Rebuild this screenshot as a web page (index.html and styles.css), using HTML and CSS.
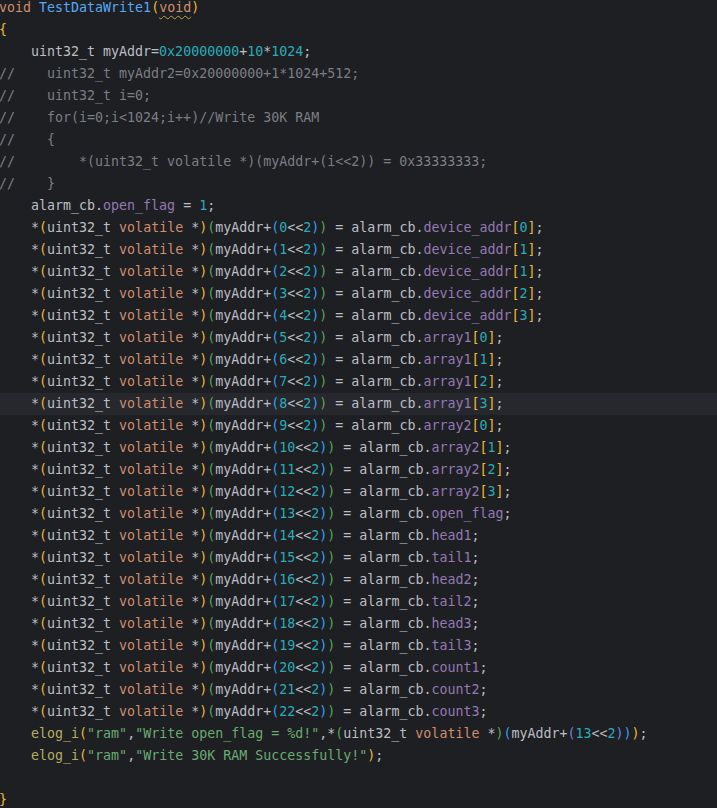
FILE: index.html
```html
<!DOCTYPE html>
<html lang="en">

<head>
    <meta charset="UTF-8">
    <meta name="viewport" content="width=device-width, initial-scale=1.0">
    <title>TestDataWrite1</title>

    <link rel="stylesheet" href="styles.css">

</head>

<body>
    <main class="editor">
<div class="line"><span class="kw">void</span> <span class="fn">TestDataWrite1</span><span class="p1">(</span><span class="kw warn">void</span><span class="p1">)</span></div>
<div class="line"><span class="p1">{</span></div>
<div class="line">    uint32_t myAddr=<span class="num">0x20000000</span>+<span class="num">10</span>*<span class="num">1024</span>;</div>
<div class="line cm">//    uint32_t myAddr2=0x20000000+1*1024+512;</div>
<div class="line cm">//    uint32_t i=0;</div>
<div class="line cm">//    for(i=0;i&lt;1024;i++)//Write 30K RAM</div>
<div class="line cm">//    {</div>
<div class="line cm">//        *(uint32_t volatile *)(myAddr+(i&lt;&lt;2)) = 0x33333333;</div>
<div class="line cm">//    }</div>
<div class="line">    alarm_cb.<span class="fld">open_flag</span> = <span class="num">1</span>;</div>
<div class="line">    *<span class="p1">(</span>uint32_t <span class="kw">volatile</span> *<span class="p1">)</span><span class="p2">(</span>myAddr+<span class="p3">(</span><span class="num">0</span>&lt;&lt;<span class="num">2</span><span class="p3">)</span><span class="p2">)</span> = alarm_cb.<span class="fld">device_addr</span><span class="p1">[</span><span class="num">0</span><span class="p1">]</span>;</div>
<div class="line">    *<span class="p1">(</span>uint32_t <span class="kw">volatile</span> *<span class="p1">)</span><span class="p2">(</span>myAddr+<span class="p3">(</span><span class="num">1</span>&lt;&lt;<span class="num">2</span><span class="p3">)</span><span class="p2">)</span> = alarm_cb.<span class="fld">device_addr</span><span class="p1">[</span><span class="num">1</span><span class="p1">]</span>;</div>
<div class="line">    *<span class="p1">(</span>uint32_t <span class="kw">volatile</span> *<span class="p1">)</span><span class="p2">(</span>myAddr+<span class="p3">(</span><span class="num">2</span>&lt;&lt;<span class="num">2</span><span class="p3">)</span><span class="p2">)</span> = alarm_cb.<span class="fld">device_addr</span><span class="p1">[</span><span class="num">1</span><span class="p1">]</span>;</div>
<div class="line">    *<span class="p1">(</span>uint32_t <span class="kw">volatile</span> *<span class="p1">)</span><span class="p2">(</span>myAddr+<span class="p3">(</span><span class="num">3</span>&lt;&lt;<span class="num">2</span><span class="p3">)</span><span class="p2">)</span> = alarm_cb.<span class="fld">device_addr</span><span class="p1">[</span><span class="num">2</span><span class="p1">]</span>;</div>
<div class="line">    *<span class="p1">(</span>uint32_t <span class="kw">volatile</span> *<span class="p1">)</span><span class="p2">(</span>myAddr+<span class="p3">(</span><span class="num">4</span>&lt;&lt;<span class="num">2</span><span class="p3">)</span><span class="p2">)</span> = alarm_cb.<span class="fld">device_addr</span><span class="p1">[</span><span class="num">3</span><span class="p1">]</span>;</div>
<div class="line">    *<span class="p1">(</span>uint32_t <span class="kw">volatile</span> *<span class="p1">)</span><span class="p2">(</span>myAddr+<span class="p3">(</span><span class="num">5</span>&lt;&lt;<span class="num">2</span><span class="p3">)</span><span class="p2">)</span> = alarm_cb.<span class="fld">array1</span><span class="p1">[</span><span class="num">0</span><span class="p1">]</span>;</div>
<div class="line">    *<span class="p1">(</span>uint32_t <span class="kw">volatile</span> *<span class="p1">)</span><span class="p2">(</span>myAddr+<span class="p3">(</span><span class="num">6</span>&lt;&lt;<span class="num">2</span><span class="p3">)</span><span class="p2">)</span> = alarm_cb.<span class="fld">array1</span><span class="p1">[</span><span class="num">1</span><span class="p1">]</span>;</div>
<div class="line">    *<span class="p1">(</span>uint32_t <span class="kw">volatile</span> *<span class="p1">)</span><span class="p2">(</span>myAddr+<span class="p3">(</span><span class="num">7</span>&lt;&lt;<span class="num">2</span><span class="p3">)</span><span class="p2">)</span> = alarm_cb.<span class="fld">array1</span><span class="p1">[</span><span class="num">2</span><span class="p1">]</span>;</div>
<div class="line current">    *<span class="p1">(</span>uint32_t <span class="kw">volatile</span> *<span class="p1">)</span><span class="p2">(</span>myAddr+<span class="p3">(</span><span class="num">8</span>&lt;&lt;<span class="num">2</span><span class="p3">)</span><span class="p2">)</span> = alarm_cb.<span class="fld">array1</span><span class="p1">[</span><span class="num">3</span><span class="p1">]</span>;</div>
<div class="line">    *<span class="p1">(</span>uint32_t <span class="kw">volatile</span> *<span class="p1">)</span><span class="p2">(</span>myAddr+<span class="p3">(</span><span class="num">9</span>&lt;&lt;<span class="num">2</span><span class="p3">)</span><span class="p2">)</span> = alarm_cb.<span class="fld">array2</span><span class="p1">[</span><span class="num">0</span><span class="p1">]</span>;</div>
<div class="line">    *<span class="p1">(</span>uint32_t <span class="kw">volatile</span> *<span class="p1">)</span><span class="p2">(</span>myAddr+<span class="p3">(</span><span class="num">10</span>&lt;&lt;<span class="num">2</span><span class="p3">)</span><span class="p2">)</span> = alarm_cb.<span class="fld">array2</span><span class="p1">[</span><span class="num">1</span><span class="p1">]</span>;</div>
<div class="line">    *<span class="p1">(</span>uint32_t <span class="kw">volatile</span> *<span class="p1">)</span><span class="p2">(</span>myAddr+<span class="p3">(</span><span class="num">11</span>&lt;&lt;<span class="num">2</span><span class="p3">)</span><span class="p2">)</span> = alarm_cb.<span class="fld">array2</span><span class="p1">[</span><span class="num">2</span><span class="p1">]</span>;</div>
<div class="line">    *<span class="p1">(</span>uint32_t <span class="kw">volatile</span> *<span class="p1">)</span><span class="p2">(</span>myAddr+<span class="p3">(</span><span class="num">12</span>&lt;&lt;<span class="num">2</span><span class="p3">)</span><span class="p2">)</span> = alarm_cb.<span class="fld">array2</span><span class="p1">[</span><span class="num">3</span><span class="p1">]</span>;</div>
<div class="line">    *<span class="p1">(</span>uint32_t <span class="kw">volatile</span> *<span class="p1">)</span><span class="p2">(</span>myAddr+<span class="p3">(</span><span class="num">13</span>&lt;&lt;<span class="num">2</span><span class="p3">)</span><span class="p2">)</span> = alarm_cb.<span class="fld">open_flag</span>;</div>
<div class="line">    *<span class="p1">(</span>uint32_t <span class="kw">volatile</span> *<span class="p1">)</span><span class="p2">(</span>myAddr+<span class="p3">(</span><span class="num">14</span>&lt;&lt;<span class="num">2</span><span class="p3">)</span><span class="p2">)</span> = alarm_cb.<span class="fld">head1</span>;</div>
<div class="line">    *<span class="p1">(</span>uint32_t <span class="kw">volatile</span> *<span class="p1">)</span><span class="p2">(</span>myAddr+<span class="p3">(</span><span class="num">15</span>&lt;&lt;<span class="num">2</span><span class="p3">)</span><span class="p2">)</span> = alarm_cb.<span class="fld">tail1</span>;</div>
<div class="line">    *<span class="p1">(</span>uint32_t <span class="kw">volatile</span> *<span class="p1">)</span><span class="p2">(</span>myAddr+<span class="p3">(</span><span class="num">16</span>&lt;&lt;<span class="num">2</span><span class="p3">)</span><span class="p2">)</span> = alarm_cb.<span class="fld">head2</span>;</div>
<div class="line">    *<span class="p1">(</span>uint32_t <span class="kw">volatile</span> *<span class="p1">)</span><span class="p2">(</span>myAddr+<span class="p3">(</span><span class="num">17</span>&lt;&lt;<span class="num">2</span><span class="p3">)</span><span class="p2">)</span> = alarm_cb.<span class="fld">tail2</span>;</div>
<div class="line">    *<span class="p1">(</span>uint32_t <span class="kw">volatile</span> *<span class="p1">)</span><span class="p2">(</span>myAddr+<span class="p3">(</span><span class="num">18</span>&lt;&lt;<span class="num">2</span><span class="p3">)</span><span class="p2">)</span> = alarm_cb.<span class="fld">head3</span>;</div>
<div class="line">    *<span class="p1">(</span>uint32_t <span class="kw">volatile</span> *<span class="p1">)</span><span class="p2">(</span>myAddr+<span class="p3">(</span><span class="num">19</span>&lt;&lt;<span class="num">2</span><span class="p3">)</span><span class="p2">)</span> = alarm_cb.<span class="fld">tail3</span>;</div>
<div class="line">    *<span class="p1">(</span>uint32_t <span class="kw">volatile</span> *<span class="p1">)</span><span class="p2">(</span>myAddr+<span class="p3">(</span><span class="num">20</span>&lt;&lt;<span class="num">2</span><span class="p3">)</span><span class="p2">)</span> = alarm_cb.<span class="fld">count1</span>;</div>
<div class="line">    *<span class="p1">(</span>uint32_t <span class="kw">volatile</span> *<span class="p1">)</span><span class="p2">(</span>myAddr+<span class="p3">(</span><span class="num">21</span>&lt;&lt;<span class="num">2</span><span class="p3">)</span><span class="p2">)</span> = alarm_cb.<span class="fld">count2</span>;</div>
<div class="line">    *<span class="p1">(</span>uint32_t <span class="kw">volatile</span> *<span class="p1">)</span><span class="p2">(</span>myAddr+<span class="p3">(</span><span class="num">22</span>&lt;&lt;<span class="num">2</span><span class="p3">)</span><span class="p2">)</span> = alarm_cb.<span class="fld">count3</span>;</div>
<div class="line">    <span class="mac">elog_i</span><span class="p1">(</span><span class="str">"ram"</span>,<span class="str">"Write open_flag = %d!"</span>,*<span class="p2">(</span>uint32_t <span class="kw">volatile</span> *<span class="p2">)</span><span class="p3">(</span>myAddr+<span class="p4">(</span><span class="num">13</span>&lt;&lt;<span class="num">2</span><span class="p4">)</span><span class="p3">)</span><span class="p1">)</span>;</div>
<div class="line">    <span class="mac">elog_i</span><span class="p1">(</span><span class="str">"ram"</span>,<span class="str">"Write 30K RAM Successfully!"</span><span class="p1">)</span>;</div>
<div class="line"> </div>
<div class="line"><span class="p1">}</span></div>
    </main>
</body>

</html>
```

FILE: styles.css
```css
* {
    margin: 0;
    padding: 0;
    box-sizing: border-box;
}

:root {
    --bg: #1e1f22;
    --caret-row: #26282e;
    --text: #bcbec4;
    --keyword: #cf8e6d;
    --function: #56a8f5;
    --number: #2aacb8;
    --comment: #7a7e85;
    --field: #9479b5;
    --string: #6aab73;
    --macro: #b3ae60;
}

html,
body {
    height: 100%;
    overflow: hidden;
}

body {
    background-color: var(--bg);
    color: var(--text);
    font-family: 'DejaVu Sans Mono', 'Liberation Mono', monospace;
    font-size: 13.3px;
}

.editor {
    display: flex;
    flex-direction: column;
    margin-top: -3px;
    margin-left: -1px;
}

.line {
    height: 22px;
    line-height: 22px;
    white-space: pre;
}

.current {
    background-color: var(--caret-row);
    margin-left: 1px;
    padding-left: 0;
    text-indent: -1px;
}

.kw { color: var(--keyword); }
.fn { color: var(--function); }
.num { color: var(--number); }
.cm { color: var(--comment); }
.fld { color: var(--field); }
.str { color: var(--string); }
.mac { color: var(--macro); }

/* rainbow brackets */
.p1 { color: #e8ba36; }
.p2 { color: #54a857; }
.p3 { color: #359ff4; }
.p4 { color: #6f86e0; }

.warn {
    text-decoration: underline wavy #b8a34a;
    text-decoration-thickness: 1px;
    text-underline-offset: 3px;
}
```
